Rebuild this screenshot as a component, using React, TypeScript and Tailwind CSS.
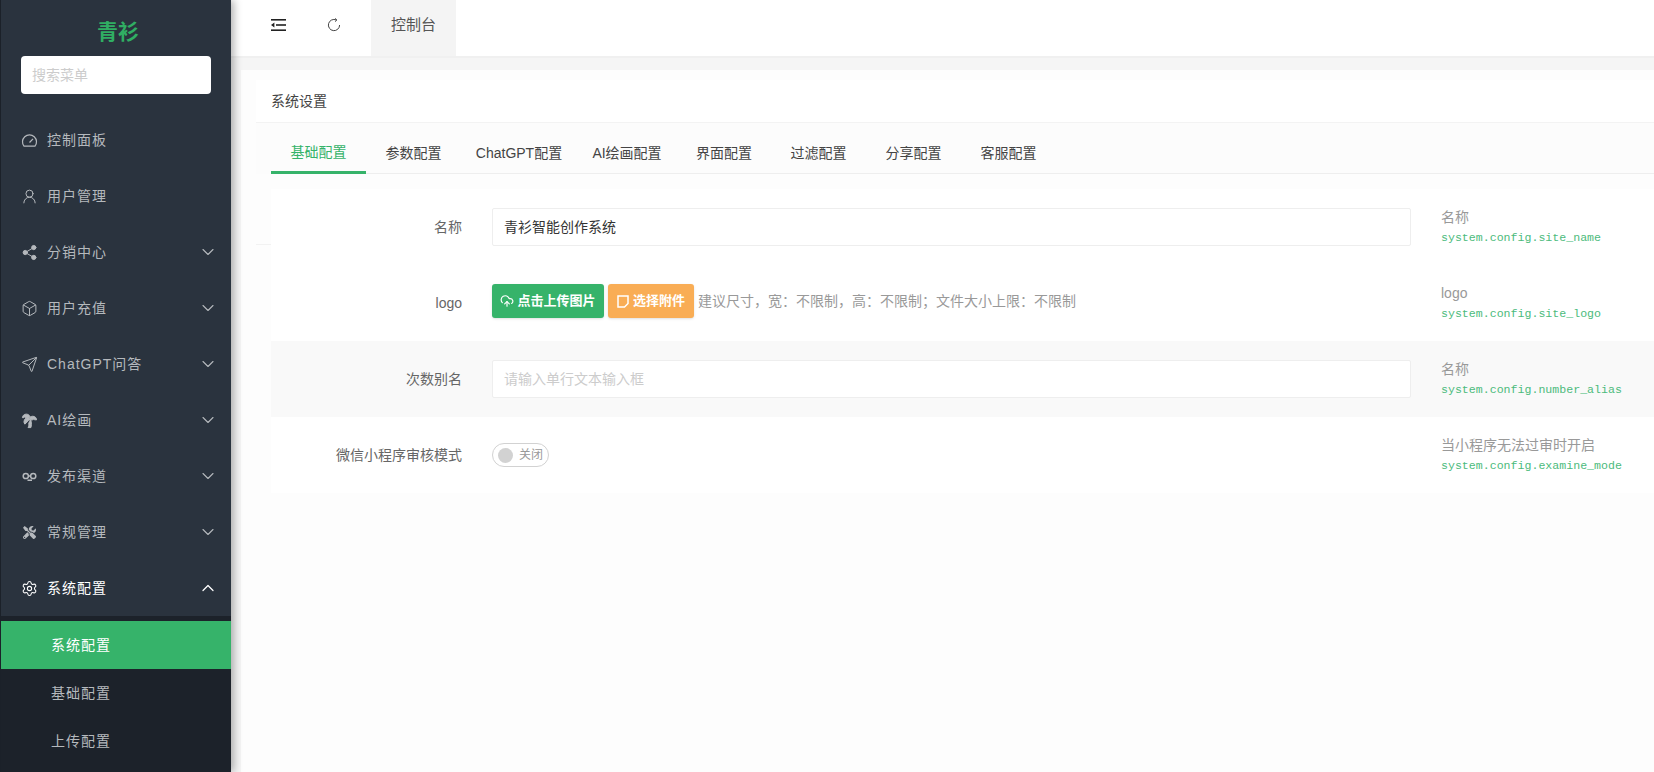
import * as React from 'react';
import {
  Box,
  ChevronDown,
  ChevronUp,
  CloudUpload,
  Send,
  Settings,
  Share2,
  TreePalm,
  UserRound,
} from 'lucide-react';
import { FaTools } from 'react-icons/fa';

const FONT = 'font-["Liberation_Sans","Noto_Sans_CJK_SC",sans-serif]';

type IconProps = { className?: string; strokeWidth?: number };

// Gauge icon, the lucide one is a different shape
const GaugeIcon: React.FC<IconProps> = ({ className }) => (
  <svg viewBox="0 0 17 17" fill="none" stroke="currentColor" strokeWidth="1.2" className={className}>
    <path d="M3 14.2A7 7 0 1 1 14 14.2Z" />
    <path d="M8.5 10.5 L12 6.8" />
  </svg>
);

// Infinity loop with a small tail under it
const LoopIcon: React.FC<IconProps> = ({ className }) => (
  <svg viewBox="0 0 17 17" fill="none" stroke="currentColor" strokeWidth="1.5" className={className}>
    <circle cx="4.8" cy="8" r="2.6" />
    <circle cx="12.2" cy="8" r="2.6" />
    <path d="M7.4 8H9.6M6.5 12.2H11" />
  </svg>
);

const ToolsIcon: React.FC<IconProps> = ({ className }) => (
  <span className={`flex items-center justify-center ${className ?? ''}`}>
    <FaTools className="h-[13px] w-[13px]" />
  </span>
);

interface MenuItem {
  label: string;
  icon: React.ComponentType<IconProps>;
  arrow?: boolean;
  filled?: boolean;
}

const MENU: MenuItem[] = [
  { label: '控制面板', icon: GaugeIcon },
  { label: '用户管理', icon: UserRound },
  { label: '分销中心', icon: Share2, arrow: true, filled: true },
  { label: '用户充值', icon: Box, arrow: true },
  { label: 'ChatGPT问答', icon: Send, arrow: true },
  { label: 'AI绘画', icon: TreePalm, arrow: true, filled: true },
  { label: '发布渠道', icon: LoopIcon, arrow: true },
  { label: '常规管理', icon: ToolsIcon, arrow: true },
];

const TABS = [
  { label: '基础配置', width: 'w-[95px]', active: true },
  { label: '参数配置', width: 'w-[95px]' },
  { label: 'ChatGPT配置', width: 'w-[116px]' },
  { label: 'AI绘画配置', width: 'w-[100px]' },
  { label: '界面配置', width: 'w-[94px]' },
  { label: '过滤配置', width: 'w-[95px]' },
  { label: '分享配置', width: 'w-[95px]' },
  { label: '客服配置', width: 'w-[95px]' },
];

const Sidebar: React.FC = () => (
  <aside className="relative z-10 flex h-full w-[231px] shrink-0 flex-col overflow-hidden border-l border-[#1b2129] bg-[#2a333e] shadow-[3px_0_8px_rgba(0,0,0,0.3)]">
    <div className="flex h-[56px] items-start justify-center pl-[4px] pt-[18px]">
      <span className="text-[21px] font-bold leading-[28px] text-[#30ae63]">青衫</span>
    </div>
    <div className="px-[20px]">
      <div className="flex h-[38px] w-[190px] items-center rounded-[4px] bg-white pl-[11px] text-[14px] text-[#cccccc]">
        搜索菜单
      </div>
    </div>
    <nav className="mt-[18px]">
      {MENU.map((item) => {
        const Icon = item.icon;
        return (
          <div key={item.label} className="flex h-[56px] items-center pl-[20px] pr-[13px] text-[#b5b9bd]">
            <Icon className={`h-[17px] w-[17px] shrink-0 ${item.filled ? 'fill-[#b5b9bd]' : ''}`} strokeWidth={1.4} />
            <span className="ml-[9px] flex-1 text-[14px] leading-none tracking-[1px]">{item.label}</span>
            {item.arrow && <ChevronDown className="h-[20px] w-[20px]" strokeWidth={1.3} />}
          </div>
        );
      })}
      <div className="flex h-[56px] items-center pl-[20px] pr-[13px] text-white">
        <Settings className="h-[17px] w-[17px] shrink-0" strokeWidth={1.5} />
        <span className="ml-[9px] flex-1 text-[14px] leading-none tracking-[1px]">系统配置</span>
        <ChevronUp className="h-[20px] w-[20px]" strokeWidth={1.5} />
      </div>
    </nav>
    <div className="flex-1 bg-[#1c222a] pt-[5px] text-[14px] tracking-[1px]">
      <div className="flex h-[48px] items-center bg-[#36b36a] pl-[50px] text-white">系统配置</div>
      <div className="flex h-[48px] items-center pl-[50px] text-[#b5b9bd]">基础配置</div>
      <div className="flex h-[48px] items-center pl-[50px] text-[#b5b9bd]">上传配置</div>
    </div>
  </aside>
);

const Header: React.FC = () => (
  <header className="flex h-[58px] shrink-0 border-b-2 border-[#f0f0f0] bg-white">
    <div className="flex w-[140px] items-center pb-[6px] pl-[40px]">
      <svg viewBox="0 0 15 12" className="h-[12px] w-[15px] text-[#222222]" fill="currentColor">
        <rect x="0" y="0" width="15" height="1.6" />
        <rect x="5" y="5.2" width="10" height="1.6" />
        <rect x="0" y="10.4" width="15" height="1.6" />
        <path d="M3.4 3.6V8.4L0 6Z" />
      </svg>
      <svg viewBox="0 0 14 14" fill="none" stroke="#444444" strokeWidth="1" className="ml-[41px] h-[14px] w-[14px]">
        <path d="M9.2 1.9A5.6 5.6 0 1 0 12.6 7" />
        <path d="M8.2 0.4 L9.9 2 L8 3.6" />
      </svg>
    </div>
    <div className="flex h-[56px] w-[85px] items-center justify-center bg-[#f4f4f4] pb-[5px] text-[15px] text-[#555555]">控制台</div>
  </header>
);

interface RowProps {
  label: string;
  desc: string;
  code: string;
  striped?: boolean;
  children: React.ReactNode;
}

const FormRow: React.FC<RowProps> = ({ label, desc, code, striped, children }) => (
  <div className={`flex h-[76px] items-center ${striped ? 'bg-[#f9f9f9]' : 'bg-white'}`}>
    <div className="w-[191px] shrink-0 text-right text-[14px] text-[#666666]">{label}</div>
    <div className="ml-[30px] flex w-[919px] shrink-0 items-center">{children}</div>
    <div className="ml-[30px] pb-[2px]">
      <div className="text-[14px] leading-[20px] text-[#999999]">{desc}</div>
      <div className='mt-[3px] font-["Liberation_Mono",monospace] text-[11.6px] leading-[16px] text-[#4cbb7c]'>{code}</div>
    </div>
  </div>
);

const TextInput: React.FC<{ value?: string; placeholder?: string }> = ({ value, placeholder }) => (
  <div
    className={`flex h-[38px] w-full items-center rounded-[2px] border border-[#eeeeee] bg-white pl-[11px] text-[14px] ${
      value ? 'text-[#333333]' : 'text-[#cccccc]'
    }`}
  >
    {value ?? placeholder}
  </div>
);

const SettingsForm: React.FC = () => (
  <div className="relative flex-1 bg-[#fdfdfd] pl-[15px] pt-[15px]">
    {/* stray hairline left of the first row */}
    <div className="absolute left-0 top-[70px] h-px w-[15px] bg-[#f2f2f2]" />
    <FormRow label="名称" desc="名称" code="system.config.site_name">
      <TextInput value="青衫智能创作系统" />
    </FormRow>
    <FormRow label="logo" desc="logo" code="system.config.site_logo">
      <div className="flex items-center pb-[4px]">
        <div className="flex h-[34px] w-[112px] items-center justify-center rounded-[3px] bg-[#36b36a] text-[13px] font-bold text-white shadow-sm">
          <CloudUpload className="mr-[3px] h-[14px] w-[14px]" strokeWidth={2} />
          点击上传图片
        </div>
        <div className="ml-[4px] flex h-[34px] w-[86px] items-center justify-center rounded-[3px] bg-[#f9ad55] text-[13px] font-bold text-white shadow-sm">
          <svg viewBox="0 0 12 13" fill="none" stroke="currentColor" strokeWidth="1.5" className="mr-[4px] h-[13px] w-[12px]">
            <path d="M1 1H11V8.5L7.5 12H1Z" />
          </svg>
          选择附件
        </div>
        <span className="ml-[4px] text-[14px] text-[#999999]">建议尺寸，宽：不限制，高：不限制；文件大小上限：不限制</span>
      </div>
    </FormRow>
    <FormRow label="次数别名" desc="名称" code="system.config.number_alias" striped>
      <TextInput placeholder="请输入单行文本输入框" />
    </FormRow>
    <FormRow label="微信小程序审核模式" desc="当小程序无法过审时开启" code="system.config.examine_mode">
      <div className="flex h-[24px] w-[57px] items-center rounded-full border border-[#d2d2d2] bg-white pl-[5px]">
        <span className="h-[15px] w-[15px] rounded-full bg-[#d2d2d2]" />
        <span className="ml-[6px] text-[12px] text-[#999999]">关闭</span>
      </div>
    </FormRow>
  </div>
);

export default function App() {
  return (
    <div className={`flex h-[772px] w-[1654px] overflow-hidden bg-[#f5f5f5] ${FONT}`}>
      <Sidebar />
      <div className="flex min-w-0 flex-1 flex-col">
        <Header />
        <main className="flex min-h-0 flex-1 flex-col pl-[10px] pt-[12px]">
          <div className="flex min-h-0 flex-1 flex-col bg-[#fdfdfd] pl-[15px] pt-[10px]">
            <div className="flex h-[43px] shrink-0 items-center border-b border-[#f3f3f3] bg-white pl-[15px] text-[14px] text-[#444444]">
              系统设置
            </div>
            <div className="flex min-h-0 flex-1 flex-col bg-[#fcfcfc]">
              <div className="ml-[15px] flex h-[51px] shrink-0 border-b border-[#eeeeee]">
                {TABS.map((tab) => (
                  <div
                    key={tab.label}
                    className={`flex h-[51px] items-center justify-center pt-[10px] text-[14px] ${tab.width} ${
                      tab.active ? 'border-b-[3px] border-[#36b36a] text-[#36b36a]' : 'text-[#444444]'
                    }`}
                  >
                    {tab.label}
                  </div>
                ))}
              </div>
              <SettingsForm />
            </div>
          </div>
        </main>
      </div>
    </div>
  );
}
